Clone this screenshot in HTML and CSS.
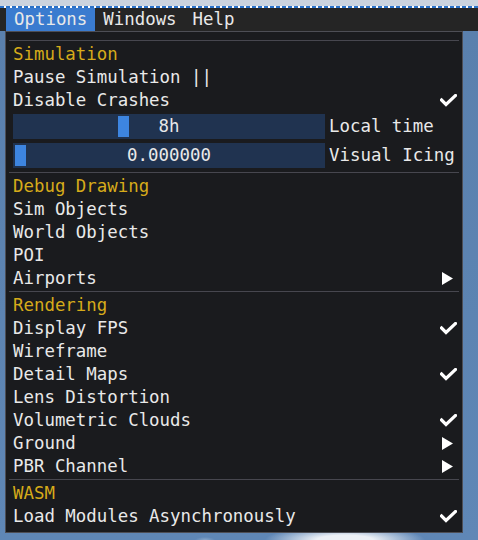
FILE: index.html
```html
<!DOCTYPE html>
<html>
<head>
<meta charset="utf-8">
<link rel="stylesheet" href="styles.css">
</head>
<body>
<div class="screen">
  <div class="topstrip"></div>
  <div class="dashline"></div>
  <div class="menubar">
    <div class="menu active">Options</div>
    <div class="menu">Windows</div>
    <div class="menu">Help</div>
  </div>
  <div class="desk">
    <div class="popup">
      <div class="sep"></div>
      <div class="row header">Simulation</div>
      <div class="row">Pause Simulation ||</div>
      <div class="row"><span>Disable Crashes</span><svg class="check" viewBox="0 0 17 13"><polyline points="1.5,6 6,10.5 15.5,1.5"/></svg></div>
      <div class="sliders">
        <div class="slrow">
          <div class="slider"><div class="grab" style="left:105px"></div><span class="slval">8h</span></div>
          <span class="sllabel">Local time</span>
        </div>
        <div class="slrow">
          <div class="slider"><div class="grab" style="left:2px"></div><span class="slval">0.000000</span></div>
          <span class="sllabel">Visual Icing</span>
        </div>
      </div>
      <div class="sep"></div>
      <div class="row header">Debug Drawing</div>
      <div class="row">Sim Objects</div>
      <div class="row">World Objects</div>
      <div class="row">POI</div>
      <div class="row"><span>Airports</span><svg class="arrow" viewBox="0 0 11 13"><polygon points="0,0 11,6.5 0,13"/></svg></div>
      <div class="sep"></div>
      <div class="row header">Rendering</div>
      <div class="row"><span>Display FPS</span><svg class="check" viewBox="0 0 17 13"><polyline points="1.5,6 6,10.5 15.5,1.5"/></svg></div>
      <div class="row">Wireframe</div>
      <div class="row"><span>Detail Maps</span><svg class="check" viewBox="0 0 17 13"><polyline points="1.5,6 6,10.5 15.5,1.5"/></svg></div>
      <div class="row">Lens Distortion</div>
      <div class="row"><span>Volumetric Clouds</span><svg class="check" viewBox="0 0 17 13"><polyline points="1.5,6 6,10.5 15.5,1.5"/></svg></div>
      <div class="row"><span>Ground</span><svg class="arrow" viewBox="0 0 11 13"><polygon points="0,0 11,6.5 0,13"/></svg></div>
      <div class="row"><span>PBR Channel</span><svg class="arrow" viewBox="0 0 11 13"><polygon points="0,0 11,6.5 0,13"/></svg></div>
      <div class="sep"></div>
      <div class="row header">WASM</div>
      <div class="row"><span>Load Modules Asynchronously</span><svg class="check" viewBox="0 0 17 13"><polyline points="1.5,6 6,10.5 15.5,1.5"/></svg></div>
    </div>
  </div>
</div>
</body>
</html>
```
FILE: styles.css
```css
* { box-sizing: border-box; }
html, body { margin: 0; padding: 0; }
body {
  width: 478px;
  height: 540px;
  overflow: hidden;
  font-family: "DejaVu Sans Mono", monospace;
  font-size: 17.4px;
  color: #e9e9e9;
}
.screen {
  width: 478px;
  height: 540px;
  display: flex;
  flex-direction: column;
}
.topstrip {
  height: 6px;
  background: #cbd3de;
}
.dashline {
  height: 2px;
  background: repeating-linear-gradient(90deg, #2b72c8 0 4px, #ffffff 4px 6px);
}
.menubar {
  height: 23px;
  background: #252525;
  display: flex;
  padding-left: 6px;
}
.menu {
  height: 23px;
  line-height: 22px;
  padding: 0 8px;
  white-space: pre;
}
.menu.active {
  background: #3a7bcf;
}
.desk {
  flex: 1;
  padding-left: 5px;
  background:
    radial-gradient(ellipse 80px 14px at 345px 100%, rgba(236,240,246,1) 35%, rgba(236,240,246,0) 100%),
    radial-gradient(ellipse 10px 3px at 205px 100%, rgba(200,215,232,0.4), rgba(200,215,232,0) 100%),
    linear-gradient(180deg, #5a80ad 0%, #5f87b6 100%);
}
.popup {
  width: 458px;
  background: #1a1b1e;
  border: 1px solid #4d4e55;
  padding: 7px 0 4px;
}
.sep {
  height: 1px;
  margin: 1px 3px 2px;
  background: #47474f;
}
.row {
  height: 23px;
  line-height: 20px;
  padding: 0 5px 2px 7px;
  display: flex;
  align-items: center;
  justify-content: space-between;
  white-space: pre;
}
.row.header { color: #d6ab1a; }
.check {
  width: 17px;
  height: 13px;
  margin-top: 1px;
}
.check polyline {
  fill: none;
  stroke: #ffffff;
  stroke-width: 3.2;
  stroke-linecap: square;
  stroke-linejoin: miter;
}
.arrow {
  width: 11px;
  height: 13px;
  margin-right: 4px;
  margin-top: 2px;
}
.arrow polygon { fill: #ffffff; }
.sliders {
  display: flex;
  flex-direction: column;
  gap: 4px;
  padding: 2px 0 3px 7px;
}
.slrow {
  display: flex;
  align-items: center;
  gap: 4px;
  height: 25px;
}
.slider {
  position: relative;
  width: 312px;
  height: 25px;
  background: #203350;
  display: flex;
  align-items: center;
  justify-content: center;
}
.grab {
  position: absolute;
  top: 2px;
  width: 11px;
  height: 21px;
  background: #3d85e0;
}
.slval {
  position: relative;
  white-space: pre;
  line-height: 22px;
  padding-bottom: 1px;
}
.sllabel {
  white-space: pre;
  line-height: 22px;
  padding-bottom: 1px;
}
```
